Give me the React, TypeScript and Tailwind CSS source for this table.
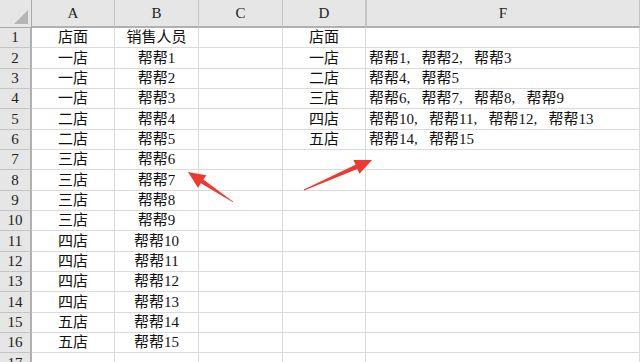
const cols = ['A', 'B', 'C', 'D', 'F'];

const shops = ['一店', '一店', '一店', '二店', '二店', '三店', '三店', '三店', '三店', '四店', '四店', '四店', '四店', '五店', '五店'];

const summary: [string, string[]][] = [
  ['一店', ['帮帮1', '帮帮2', '帮帮3']],
  ['二店', ['帮帮4', '帮帮5']],
  ['三店', ['帮帮6', '帮帮7', '帮帮8', '帮帮9']],
  ['四店', ['帮帮10', '帮帮11', '帮帮12', '帮帮13']],
  ['五店', ['帮帮14', '帮帮15']],
];

type Row = { a: string; b: string; d: string; f: string[] };

const rows: Row[] = [{ a: '店面', b: '销售人员', d: '店面', f: [] }];
for (let i = 0; i < 16; i++) {
  rows.push({
    a: shops[i] ?? '',
    b: i < 15 ? `帮帮${i + 1}` : '',
    d: summary[i]?.[0] ?? '',
    f: summary[i]?.[1] ?? [],
  });
}

// tapered arrow: thin tail, wide triangular head
function arrowPoints(tx: number, ty: number, hx: number, hy: number) {
  const dx = hx - tx;
  const dy = hy - ty;
  const len = Math.hypot(dx, dy);
  const ux = dx / len;
  const uy = dy / len;
  const nx = -uy;
  const ny = ux;
  const headLen = 17;
  const headW = 7.5;
  const shaftW = 2.2;
  const bx = hx - ux * headLen;
  const by = hy - uy * headLen;
  const pts = [
    [tx + nx * 0.4, ty + ny * 0.4],
    [bx + nx * shaftW, by + ny * shaftW],
    [bx + nx * headW, by + ny * headW],
    [hx, hy],
    [bx - nx * headW, by - ny * headW],
    [bx - nx * shaftW, by - ny * shaftW],
    [tx - nx * 0.4, ty - ny * 0.4],
  ];
  return pts.map((p) => p.map((v) => v.toFixed(1)).join(',')).join(' ');
}

const cell = 'border-r border-b border-[#dadada] flex items-center whitespace-nowrap overflow-hidden';
const head = 'border-r border-b border-[#c4c4c4] bg-[#e6e6e6] flex items-center justify-center text-[#222]';

// joined names with half-width ", " as in the sheet font
function NameList({ names }: { names: string[] }) {
  return (
    <>
      {names.map((n, i) => (
        <span key={n} className="flex">
          {i > 0 && <span className="inline-block w-[15px]">,</span>}
          {n}
        </span>
      ))}
    </>
  );
}

export default function App() {
  return (
    <div className="relative w-[640px] h-[362px] overflow-hidden bg-white font-['Liberation_Serif','Noto_Sans_CJK_SC',serif] text-[15px] text-[#111]">
      <div className="grid grid-cols-[32px_83px_84px_84px_83px_1fr] grid-rows-[28px_repeat(17,20.33px)]">
        <div className="relative border-r border-b border-[#a8a8a8] bg-[#e6e6e6]">
          <div className="absolute right-[3px] bottom-[3px] w-0 h-0 border-l-[14px] border-l-transparent border-b-[14px] border-b-[#b5b5b5]" />
        </div>
        {cols.map((c) => (
          <div key={c} className={`${head} border-b-2 border-b-[#b0b0b0] ${c === 'F' ? 'border-l border-l-[#c4c4c4]' : ''}`}>
            {c}
          </div>
        ))}
        {rows.map((r, i) => (
          <div key={i} className="contents">
            <div className={`${head} border-r-2 border-r-[#b0b0b0]`}>{i + 1}</div>
            <div className={`${cell} justify-center`}>{r.a}</div>
            <div className={`${cell} justify-center`}>{r.b}</div>
            <div className={cell} />
            <div className={`${cell} justify-center`}>{r.d}</div>
            <div className={`${cell} pl-[3px]`}>
              <NameList names={r.f} />
            </div>
          </div>
        ))}
      </div>
      <svg className="absolute left-0 top-0" width="640" height="362">
        <polygon points={arrowPoints(233, 202, 188, 172)} fill="#ec3a30" />
        <polygon points={arrowPoints(304, 190, 372, 160)} fill="#ec3a30" />
      </svg>
    </div>
  );
}
